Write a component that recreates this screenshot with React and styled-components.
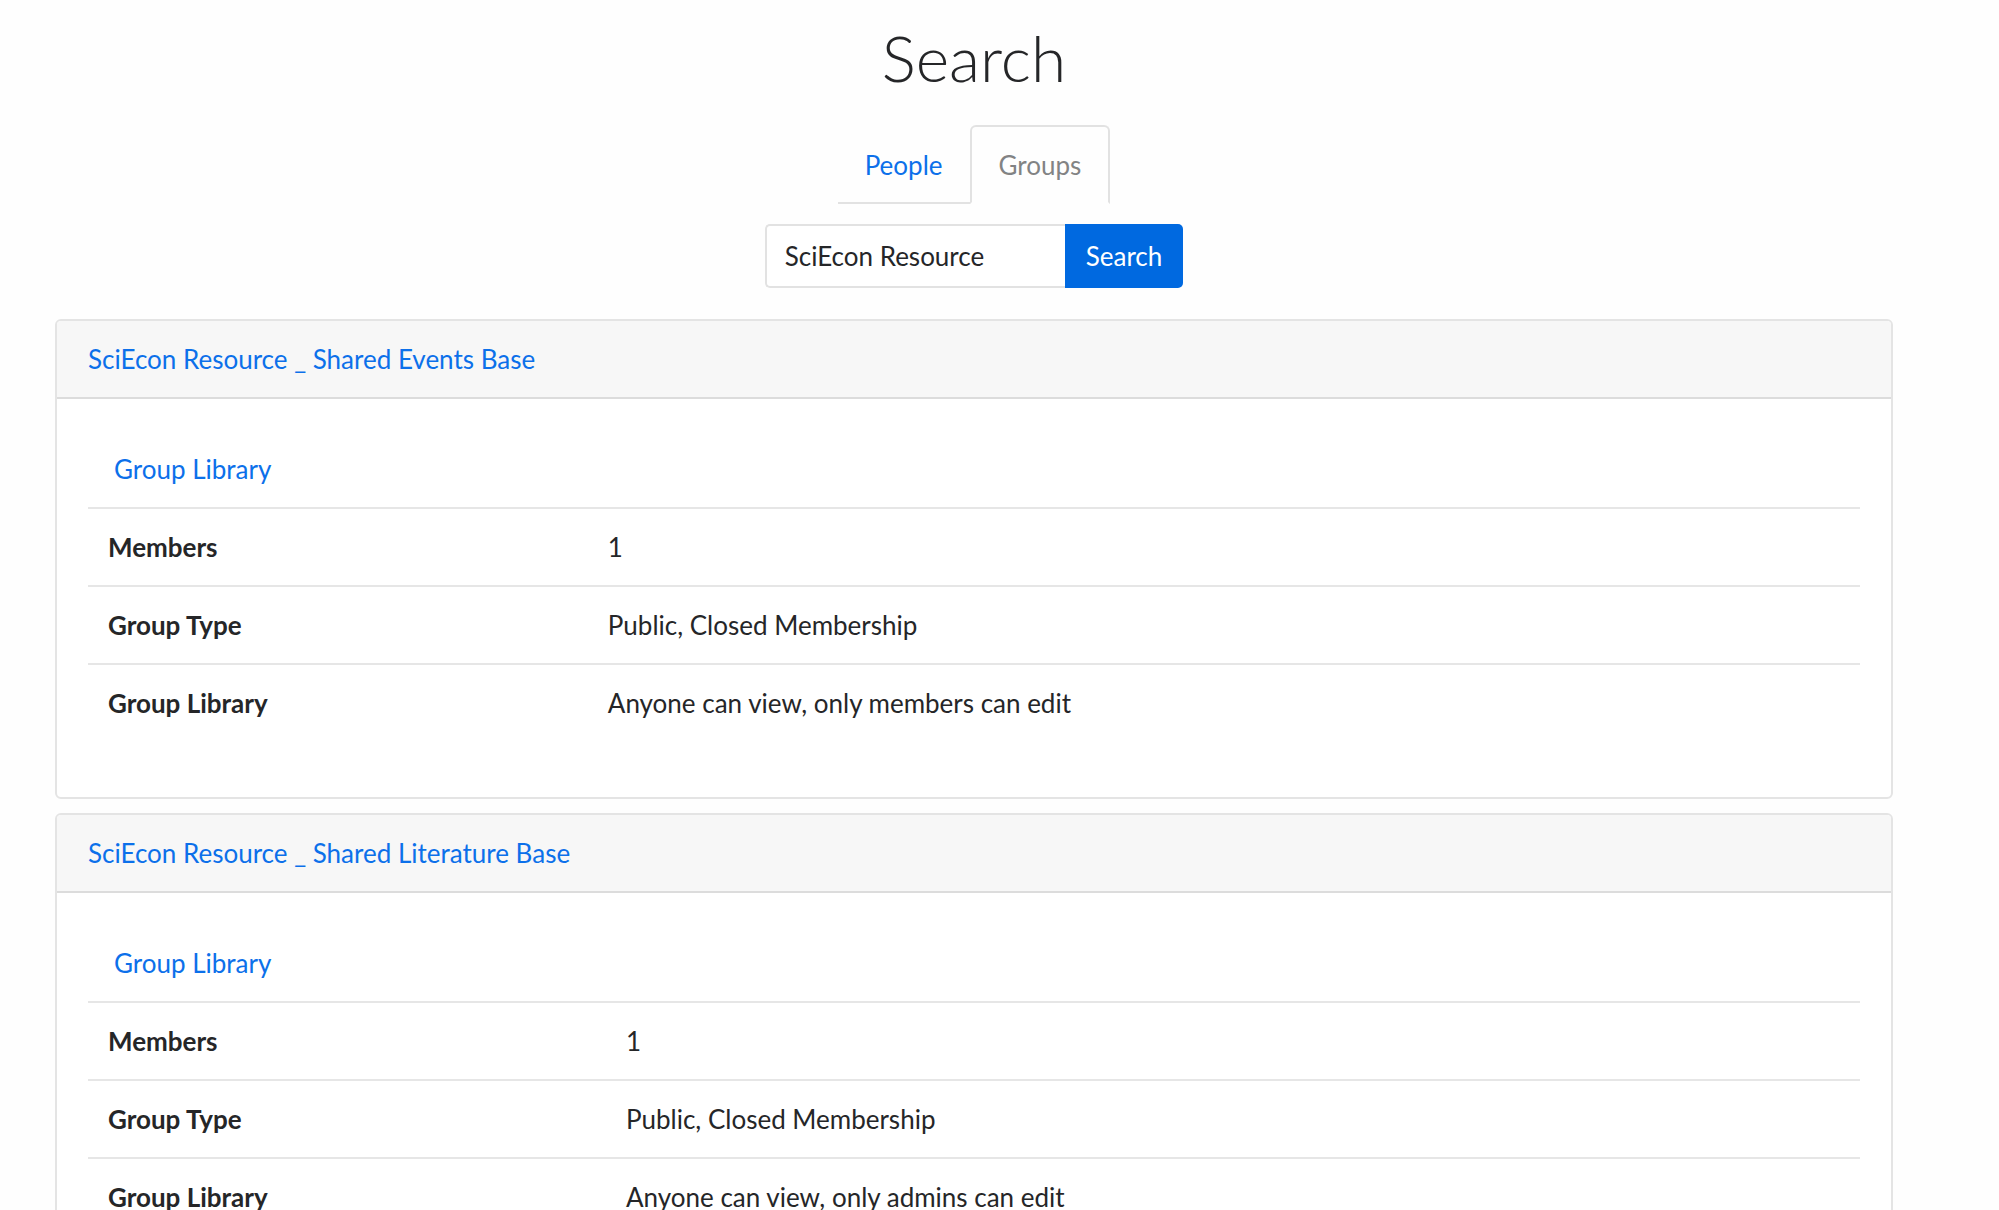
import React, { useState } from "react";
import styled, { createGlobalStyle } from "styled-components";

const GlobalStyle = createGlobalStyle`
  *, *::before, *::after { box-sizing: border-box; }
  body {
    margin: 0;
    background: #fefefe;
    color: #252628;
    font-family: Lato, "Open Sans", sans-serif;
    font-size: 26px;
    line-height: 38px;
  }
`;

const Page = styled.main`
  padding: 18px 106px 0 55px;
`;

const Title = styled.h1`
  margin: 0 0 27px;
  font-size: 64px;
  line-height: 80px;
  font-weight: 300;
  text-align: center;
`;

const Tabs = styled.nav`
  display: flex;
  justify-content: center;
  margin-bottom: 20px;
`;

const Tab = styled.a`
  padding: 19px 27px 18px;
  border: 2px solid;
  color: ${(p) => (p.$active ? "#828384" : "#0c70ea")};
  text-decoration: none;
  ${(p) =>
    p.$active
      ? `
    border-color: #e2e2e2 #e2e2e2 transparent;
    border-radius: 6px 6px 0 0;`
      : `
    border-color: transparent transparent #e2e2e2;
    border-width: 2px 0;`}
`;

const SearchForm = styled.form`
  display: flex;
  justify-content: center;
  height: 64px;
  margin-bottom: 31px;
`;

const SearchInput = styled.input`
  width: 300px;
  padding: 0 18px;
  border: 2px solid #e2e2e2;
  border-right: 0;
  border-radius: 5px 0 0 5px;
  background: #fff;
  color: inherit;
  font: inherit;
  outline: none;
`;

const SearchButton = styled.button`
  padding: 0 21px;
  border: 0;
  border-radius: 0 5px 5px 0;
  background: #0069e0;
  color: #fff;
  font: inherit;
`;

const Card = styled.article`
  margin-bottom: 14px;
  border: 2px solid #e4e4e4;
  border-radius: 6px;
  background: #fff;
`;

const CardHeader = styled.header`
  padding: 19px 31px;
  border-bottom: 2px solid #dcdcdc;
  border-radius: 4px 4px 0 0;
  background: #f7f7f7;
`;

const CardBody = styled.div`
  padding: 32px 31px 56px;
`;

const Link = styled.a`
  color: #0c70ea;
  text-decoration: none;
`;

const LibraryLink = styled(Link)`
  display: inline-block;
  padding: 19px 26px;
`;

const Details = styled.table`
  width: 100%;
  border-collapse: separate;
  border-spacing: 0;

  th, td {
    padding: 19px 20px;
    border-top: 2px solid #e6e6e6;
    text-align: left;
  }

  th {
    padding-right: 18px;
  }
`;

const groups = [
  { name: "SciEcon Resource _ Shared Events Base", library: "Anyone can view, only members can edit" },
  { name: "SciEcon Resource _ Shared Literature Base", library: "Anyone can view, only admins can edit" },
];

function GroupCard({ name, library }) {
  return (
    <Card>
      <CardHeader><Link href="#group">{name}</Link></CardHeader>
      <CardBody>
        <LibraryLink href="#library">Group Library</LibraryLink>
        <Details>
          <tbody>
            <tr><th scope="row">Members</th><td>1</td></tr>
            <tr><th scope="row">Group Type</th><td>Public, Closed Membership</td></tr>
            <tr><th scope="row">Group Library</th><td>{library}</td></tr>
          </tbody>
        </Details>
      </CardBody>
    </Card>
  );
}

export default function App() {
  const [query, setQuery] = useState("SciEcon Resource");
  return (
    <>
      <GlobalStyle />
      <Page>
        <Title>Search</Title>
        <Tabs aria-label="Search type">
          <Tab href="#people">People</Tab>
          <Tab href="#groups" $active aria-current="page">Groups</Tab>
        </Tabs>
        <SearchForm onSubmit={(e) => e.preventDefault()}>
          <SearchInput aria-label="Search groups" value={query} onChange={(e) => setQuery(e.target.value)} />
          <SearchButton type="submit">Search</SearchButton>
        </SearchForm>
        {groups.map((g) => <GroupCard key={g.name} {...g} />)}
      </Page>
    </>
  );
}
